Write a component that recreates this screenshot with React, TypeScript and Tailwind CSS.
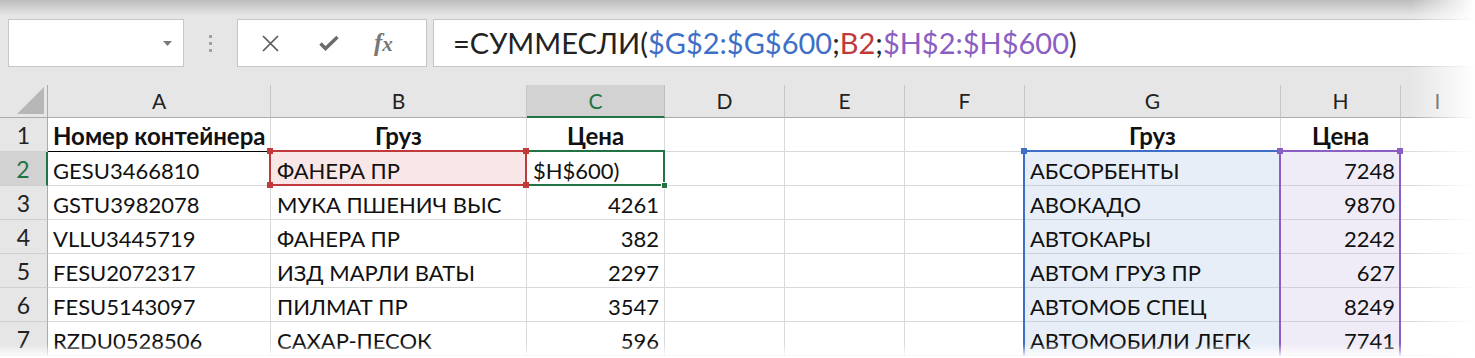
import React from 'react'

const W = ['w-[48px]', 'w-[223px]', 'w-[256px]', 'w-[138px]', 'w-[120px]', 'w-[120px]', 'w-[120px]', 'w-[256px]', 'w-[120px]', 'flex-1']
const LETTERS = ['', 'A', 'B', 'C', 'D', 'E', 'F', 'G', 'H', 'I']

const RED = '#c0393b'
const GREEN = '#217346'
const BLUE = '#3e6fc6'
const PURPLE = '#8a5ec2'

type Row = [string, string, string | number, string, number]

const rows: Row[] = [
  ['GESU3466810', 'ФАНЕРА ПР', '$H$600)', 'АБСОРБЕНТЫ', 7248],
  ['GSTU3982078', 'МУКА ПШЕНИЧ ВЫС', 4261, 'АВОКАДО', 9870],
  ['VLLU3445719', 'ФАНЕРА ПР', 382, 'АВТОКАРЫ', 2242],
  ['FESU2072317', 'ИЗД МАРЛИ ВАТЫ', 2297, 'АВТОМ ГРУЗ ПР', 627],
  ['FESU5143097', 'ПИЛМАТ ПР', 3547, 'АВТОМОБ СПЕЦ', 8249],
  ['RZDU0528506', 'САХАР-ПЕСОК', 596, 'АВТОМОБИЛИ ЛЕГК', 7741],
]

function Handle({ pos, color }: { pos: string; color: string }) {
  return <span className={`absolute h-[6px] w-[6px] ${pos}`} style={{ background: color }} />
}

function Toolbar() {
  return (
    <div className="flex h-[85px] items-start bg-[#e6e6e6] pl-[8px] pt-[19px]">
      <div className="flex h-[48px] w-[176px] items-center justify-end border border-[#c6c6c6] bg-white pr-[11px]">
        <svg width="9" height="5" viewBox="0 0 9 5">
          <path d="M0 0h9L4.5 5z" fill="#7a7a7a" />
        </svg>
      </div>
      <div className="flex h-[48px] w-[53px] flex-col items-center justify-center gap-[4px]">
        <span className="h-[3px] w-[3px] bg-[#a0a0a0]" />
        <span className="h-[3px] w-[3px] bg-[#a0a0a0]" />
        <span className="h-[3px] w-[3px] bg-[#a0a0a0]" />
      </div>
      <div className="flex h-[48px] w-[190px] items-center border border-[#c6c6c6] bg-white">
        <svg className="ml-[23px]" width="19" height="19" viewBox="0 0 19 19">
          <path d="M2 2l15 15M17 2L2 17" stroke="#5a5a5a" strokeWidth="1.7" />
        </svg>
        <svg className="ml-[39px]" width="20" height="16" viewBox="0 0 20 16">
          <path d="M1.5 8.5l5 5L18.5 2" stroke="#6a6a6a" strokeWidth="3.4" fill="none" />
        </svg>
        <span className="ml-[35px] pb-[2px] font-['Liberation_Serif',serif] text-[25px] font-bold italic leading-none text-[#777]">
          f<span className="text-[21px]">x</span>
        </span>
      </div>
      <div className="ml-[6px] flex h-[48px] flex-1 items-center border border-r-0 border-[#c6c6c6] bg-white pl-[19px] text-[29px] text-[#222]">
        <span>=СУММЕСЛИ(</span>
        <span style={{ color: BLUE }}>$G$2:$G$600</span>
        <span>;</span>
        <span style={{ color: RED }}>B2</span>
        <span>;</span>
        <span style={{ color: PURPLE }}>$H$2:$H$600</span>
        <span>)</span>
      </div>
    </div>
  )
}

function HeaderRow() {
  return (
    <div className="flex h-[33px] bg-[#e6e6e6]">
      {LETTERS.map((l, i) => {
        if (i === 0)
          return (
            <div key={i} className={`${W[i]} relative border-r border-b border-[#ababab]`}>
              <svg className="absolute bottom-[3px] right-[3px]" width="27" height="27" viewBox="0 0 27 27">
                <path d="M27 0V27H0z" fill="#b7b7b7" />
              </svg>
            </div>
          )
        const sel = l === 'C'
        return (
          <div
            key={i}
            className={`${W[i]} flex items-center justify-center border-r text-[21px] ${
              sel
                ? 'border-b-2 border-r-[#bdbdbd] border-b-[#217346] bg-[#d2d2d2] text-[#217346]'
                : 'border-b border-r-[#c6c6c6] border-b-[#ababab] text-[#222]'
            }`}
          >
            {l}
          </div>
        )
      })}
    </div>
  )
}

function RowHead({ n }: { n: number }) {
  const sel = n === 2
  return (
    <div
      className={`${W[0]} flex items-center justify-center border-b border-b-[#d0d0d0] pt-[2px] text-[23px] ${
        sel ? 'border-r-2 border-r-[#217346] bg-[#d2d2d2] text-[#217346]' : 'border-r border-r-[#ababab] bg-[#e6e6e6] text-[#222]'
      }`}
    >
      {n}
    </div>
  )
}

function Cell({
  i,
  children,
  className = '',
  right = false,
}: {
  i: number
  children?: React.ReactNode
  className?: string
  right?: boolean
}) {
  return (
    <div
      className={`${W[i]} relative flex items-center whitespace-nowrap border-r border-b border-[#d9d9d9] px-[5px] pt-[3px] text-[22px] ${
        right ? 'justify-end' : ''
      } ${className}`}
    >
      {children}
    </div>
  )
}

function TitleRow() {
  return (
    <div className="flex h-[34px] bg-white">
      <RowHead n={1} />
      <Cell i={1} className="border-b-black text-[24px] font-bold">Номер контейнера</Cell>
      <Cell i={2} className="justify-center border-b-black text-[24px] font-bold">Груз</Cell>
      <Cell i={3} className="justify-center border-b-black text-[24px] font-bold">Цена</Cell>
      <Cell i={4} />
      <Cell i={5} />
      <Cell i={6} />
      <Cell i={7} className="justify-center text-[24px] font-bold">Груз</Cell>
      <Cell i={8} className="justify-center text-[24px] font-bold">Цена</Cell>
      <Cell i={9} />
    </div>
  )
}

function DataRow({ r, idx }: { r: Row; idx: number }) {
  const first = idx === 0
  return (
    <div className="flex h-[34px] bg-white">
      <RowHead n={idx + 2} />
      <Cell i={1}>{r[0]}</Cell>
      <Cell i={2} className={first ? 'bg-[#f9e7e7] pl-[6px]' : 'pl-[6px]'}>
        {r[1]}
        {first && (
          <span className="absolute -top-[2px] -left-[2px] -right-px -bottom-px z-20 border-2" style={{ borderColor: RED }}>
            <Handle pos="-top-[4px] -left-[4px]" color={RED} />
            <Handle pos="-top-[4px] -right-[4px]" color={RED} />
            <Handle pos="-bottom-[4px] -left-[4px]" color={RED} />
            <Handle pos="-bottom-[4px] -right-[4px]" color={RED} />
          </span>
        )}
      </Cell>
      <Cell i={3} right={!first} className={first ? 'pl-[6px]' : ''}>
        {r[2]}
        {first && (
          <span className="absolute -top-[2px] -left-[2px] -right-px -bottom-px z-10 border-2" style={{ borderColor: GREEN }}>
            <span className="absolute -bottom-[5px] -right-[5px] h-[7px] w-[7px] border border-white" style={{ background: GREEN }} />
          </span>
        )}
      </Cell>
      <Cell i={4} />
      <Cell i={5} />
      <Cell i={6} />
      <Cell i={7} className="bg-[#e8eef8] border-b-[#cdd2da]">
        {r[3]}
        <span
          className={`absolute -left-[2px] -right-px bottom-[-1px] z-10 border-x-2 ${first ? '-top-[2px] border-t-2' : 'top-0'}`}
          style={{ borderColor: BLUE }}
        >
          {first && <Handle pos="-top-[4px] -left-[4px]" color={BLUE} />}
        </span>
      </Cell>
      <Cell i={8} right className="bg-[#f0ecf7] border-b-[#d2cfd9]">
        {r[4]}
        <span
          className={`absolute -left-[2px] -right-px bottom-[-1px] z-10 border-x-2 ${first ? '-top-[2px] border-t-2' : 'top-0'}`}
          style={{ borderColor: PURPLE }}
        >
          {first && <Handle pos="-top-[4px] -left-[4px]" color={PURPLE} />}
          {first && <Handle pos="-top-[4px] -right-[4px]" color={PURPLE} />}
        </span>
      </Cell>
      <Cell i={9} />
    </div>
  )
}

export default function App() {
  return (
    <div className="relative h-[358px] w-[1475px] overflow-hidden bg-white font-['Lato',sans-serif] text-[#111]">
      <Toolbar />
      <HeaderRow />
      <TitleRow />
      {rows.map((r, idx) => (
        <DataRow key={idx} r={r} idx={idx} />
      ))}
      <div className="pointer-events-none absolute inset-x-0 top-0 z-30 h-[16px] bg-linear-to-b from-[#bdbdbd] to-transparent" />
      <div className="pointer-events-none absolute inset-x-0 bottom-0 z-30 h-[14px] bg-linear-to-b from-transparent to-white" />
      <div className="pointer-events-none absolute inset-y-0 right-0 z-40 w-[64px] bg-linear-to-r from-transparent to-white" />
    </div>
  )
}
